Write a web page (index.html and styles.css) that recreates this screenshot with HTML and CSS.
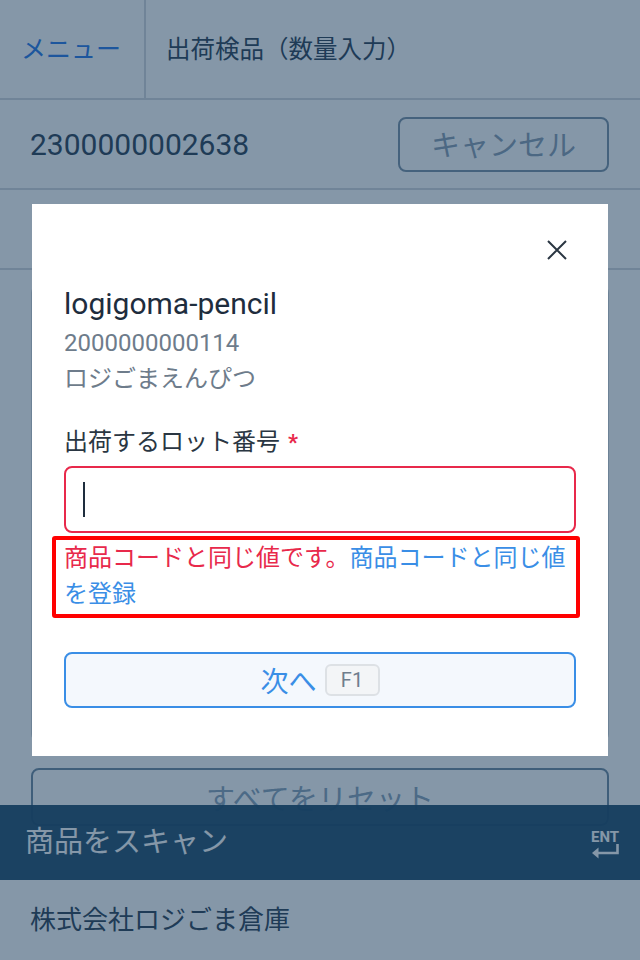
FILE: index.html
```html
<!DOCTYPE html>
<html lang="ja">
<head>
<meta charset="utf-8">
<title>出荷検品（数量入力）</title>
<link rel="stylesheet" href="styles.css">
</head>
<body>
<div class="app">
  <header class="topbar">
    <div class="menu">メニュー</div>
    <div class="page-title">出荷検品（数量入力）</div>
  </header>
  <div class="slip">
    <div class="slip-code">2300000002638</div>
    <button class="btn-cancel">キャンセル</button>
  </div>
  <div class="band"></div>
  <main class="content">
    <div class="card"></div>
    <button class="btn-reset">すべてをリセット</button>
  </main>
  <div class="scanbar">
    <span class="scan-placeholder">商品をスキャン</span>
    <svg class="ent-icon" width="32" height="32" viewBox="0 0 32 32">
      <text x="3" y="15" textLength="28" lengthAdjust="spacingAndGlyphs" class="ent-text">ENT</text>
      <path d="M29.5 17 V26 H9" fill="none" stroke="currentColor" stroke-width="2.6"/>
      <path d="M4 26 L10.5 20.5 V31.5 Z" fill="currentColor"/>
    </svg>
  </div>
  <footer class="footer">株式会社ロジごま倉庫</footer>
</div>

<div class="backdrop">
  <div class="modal">
    <div class="modal-head">
      <button class="close-btn" aria-label="閉じる">
        <svg width="20" height="20" viewBox="0 0 20 20">
          <path d="M1 1 L19 19 M19 1 L1 19" stroke="currentColor" stroke-width="2" fill="none"/>
        </svg>
      </button>
    </div>
    <div class="item-name">logigoma-pencil</div>
    <div class="item-sub">2000000000114</div>
    <div class="item-sub">ロジごまえんぴつ</div>
    <div class="field-label">出荷するロット番号 <span class="req">*</span></div>
    <div class="field-input"><span class="caret"></span></div>
    <div class="field-error">商品コードと同じ値です。<span class="error-link">商品コードと同じ値を登録</span></div>
    <button class="btn-next">次へ <span class="key">F1</span></button>
  </div>
</div>
</body>
</html>
```
FILE: styles.css
```css
* { box-sizing: border-box; }
html, body {
  margin: 0;
  padding: 0;
  width: 640px;
  height: 960px;
  overflow: hidden;
  background: #ffffff;
  font-family: Roboto, "Noto Sans CJK JP", sans-serif;
  color: #33475b;
}
button { font-family: inherit; }

.app {
  display: flex;
  flex-direction: column;
  height: 960px;
}

.topbar {
  display: flex;
  height: 100px;
  border-bottom: 2px solid #d5d9de;
}
.menu {
  width: 146px;
  border-right: 2px solid #d5d9de;
  display: flex;
  align-items: center;
  justify-content: center;
  font-size: 25px;
  color: #2f7de9;
  padding: 0 2px 4px 0;
}
.page-title {
  display: flex;
  align-items: center;
  padding: 0 0 4px 20px;
  font-size: 24.5px;
  color: #33475b;
}

.slip {
  height: 90px;
  border-bottom: 2px solid #d5d9de;
  display: flex;
  align-items: center;
  justify-content: space-between;
  padding: 0 31px 0 30px;
}
.slip-code {
  font-size: 30px;
  color: #33475b;
}
.btn-cancel {
  width: 211px;
  height: 55px;
  border: 2px solid #7f95a9;
  border-radius: 8px;
  background: #ffffff;
  color: #8ca0b5;
  font-size: 29px;
  padding: 0 0 2px;
}

.band {
  height: 80px;
  border-bottom: 2px solid #d5d9de;
}

.content {
  height: 556px;
  padding: 15px 31px 0;
  display: flex;
  flex-direction: column;
  gap: 26px;
}
.card {
  height: 457px;
  border: 2px solid #cfd5db;
  border-radius: 8px;
}
.btn-reset {
  height: 58px;
  border: 2px solid #738da3;
  border-radius: 8px;
  background: transparent;
  color: #8ca4ba;
  font-size: 29px;
  padding: 0;
}

.scanbar {
  position: relative;
  z-index: 1;
  margin-top: -21px;
  height: 75px;
  background: rgba(32, 76, 108, 0.95);
  display: flex;
  align-items: center;
  justify-content: space-between;
  padding: 0 20px 0 25px;
  color: #ffffff;
}
.scan-placeholder {
  font-size: 29px;
  color: #ffffff;
  margin-top: -7px;
}
.ent-icon {
  color: #ffffff;
}
.ent-text {
  font-family: "Roboto", sans-serif;
  font-weight: 700;
  font-size: 15.5px;
  fill: currentColor;
}

.footer {
  height: 80px;
  display: flex;
  align-items: center;
  padding: 0 0 5px 30px;
  font-size: 26px;
  color: #33475b;
}

/* modal */
.backdrop {
  position: fixed;
  inset: 0;
  z-index: 10;
  background: rgba(11, 47, 81, 0.5);
  display: flex;
  align-items: center;
  justify-content: center;
}
.modal {
  width: 576px;
  height: 552px;
  background: #ffffff;
  padding: 24px 32px 48px;
  display: flex;
  flex-direction: column;
}
.modal-head {
  display: flex;
  justify-content: flex-end;
  height: 44px;
}
.close-btn {
  width: 44px;
  height: 44px;
  margin-right: -3px;
  border: none;
  background: transparent;
  padding: 0;
  display: flex;
  align-items: center;
  justify-content: center;
  color: #2a3642;
}
.item-name {
  margin-top: 12px;
  font-size: 30px;
  line-height: 40px;
  color: #1e2d3d;
}
.item-sub {
  font-size: 24px;
  line-height: 36px;
  color: #6e7c8b;
}
.item-name + .item-sub {
  margin-top: 1px;
}
.field-label {
  margin-top: 27px;
  font-size: 24px;
  line-height: 36px;
  color: #2a3642;
}
.req {
  color: #e8294b;
  font-weight: 700;
  font-size: 22px;
  margin-left: 2px;
}
.field-input {
  margin-top: 5px;
  height: 68px;
  border: 2px solid #e8294b;
  border-radius: 8px;
  display: flex;
  align-items: center;
  padding-left: 17px;
}
.caret {
  width: 2px;
  height: 35px;
  background: #1e2d3d;
}
.field-error {
  margin: 3px -4px 0 -12px;
  border: 4px solid #ff0000;
  border-radius: 3px;
  padding: 0 4px 2px 8px;
  font-size: 24px;
  line-height: 36px;
  color: #e8294b;
}
.error-link {
  color: #3a8ee6;
}
.btn-next {
  margin-top: 34px;
  height: 57px;
  border: 2px solid #3a8ee6;
  border-radius: 8px;
  background: #f4f8fd;
  color: #3a8ee6;
  font-size: 28px;
  display: flex;
  align-items: center;
  justify-content: center;
  gap: 8px;
  padding: 0;
}
.key {
  display: inline-flex;
  align-items: center;
  justify-content: center;
  width: 55px;
  height: 32px;
  border: 2px solid #dde1e5;
  border-radius: 6px;
  background: #f3f5f7;
  color: #6f7d8c;
  font-size: 20px;
}
```
